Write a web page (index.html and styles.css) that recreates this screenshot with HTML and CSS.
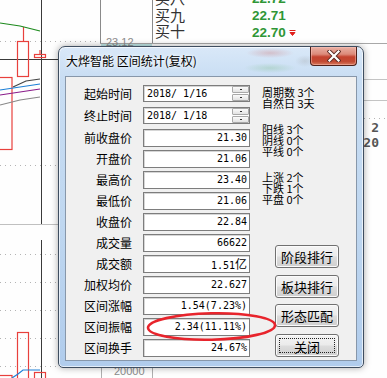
FILE: index.html
```html
<!DOCTYPE html>
<html lang="zh-CN">
<head>
<meta charset="utf-8">
<title>区间统计</title>
<link rel="stylesheet" href="styles.css">
</head>
<body>
<div class="stage">
  <svg class="chart" width="387" height="378" viewBox="0 0 387 378">
    <g stroke="#b4b4b4" stroke-dasharray="1 4">
      <line x1="0" y1="41.5" x2="100" y2="41.5"/>
      <line x1="0" y1="165.5" x2="58" y2="165.5"/>
      <line x1="0" y1="254.5" x2="58" y2="254.5"/>
      <line x1="0" y1="282.5" x2="58" y2="282.5"/>
      <line x1="0" y1="310.5" x2="58" y2="310.5"/>
      <line x1="0" y1="338.5" x2="58" y2="338.5"/>
      <line x1="0" y1="366.5" x2="58" y2="366.5"/>
      <line x1="364" y1="118.5" x2="387" y2="118.5"/>
    </g>
    <line x1="0" y1="224.5" x2="58" y2="224.5" stroke="#c0c0c0"/>
    <line x1="41.5" y1="0" x2="41.5" y2="224" stroke="#3a3a3a"/>
    <line x1="41.5" y1="240" x2="41.5" y2="378" stroke="#3a3a3a"/>
    <line x1="0" y1="59.5" x2="58" y2="59.5" stroke="#3a3a3a"/>
    <line x1="100.5" y1="0" x2="100.5" y2="43" stroke="#8a8a8a"/>
    <line x1="152.5" y1="0" x2="152.5" y2="43" stroke="#8a8a8a"/>
    <line x1="100" y1="43.5" x2="387" y2="43.5" stroke="#a8a8a8"/>
    <rect x="101" y="44" width="51" height="3" fill="#bfe6e6"/>
    <line x1="364" y1="79.5" x2="387" y2="79.5" stroke="#c4c4c4"/>
    <line x1="364" y1="100.5" x2="387" y2="100.5" stroke="#c4c4c4"/>
    <line x1="101.5" y1="365" x2="101.5" y2="378" stroke="#b0b0b0"/>
    <line x1="152.5" y1="365" x2="152.5" y2="378" stroke="#b0b0b0"/>

    <g fill="none" stroke="#e8403c" stroke-width="1.2">
      <line x1="23.5" y1="27" x2="23.5" y2="41.5"/>
      <rect x="17.5" y="41.5" width="11" height="35"/>
      <rect x="-1" y="77.5" width="13" height="72"/>
      <rect x="34.5" y="54.5" width="11" height="3"/>
      <line x1="40" y1="50" x2="40" y2="54"/>
      <rect x="17.5" y="332.5" width="11" height="50"/>
      <rect x="-1" y="375.5" width="13" height="10"/>
      <rect x="34.5" y="372.5" width="11" height="10"/>
    </g>
    <g fill="none" stroke-width="1.2">
      <polyline points="0,23 20,26 40,31" stroke="#1d8a1d"/>
      <polyline points="13,87 26,81 40,79" stroke="#444"/>
      <polyline points="0,90 20,87 40,84" stroke="#1c7fd6"/>
      <polyline points="0,95 20,92 40,89" stroke="#8a1c8a"/>
      <polyline points="0,105 20,100 40,97" stroke="#888"/>
      <polyline points="12,378 18,374 23,370 40,370" stroke="#1c7fd6"/>
    </g>

    <g class="bidname">
      <text x="155" y="4">买八</text>
      <text x="155" y="21">买九</text>
      <text x="155" y="37">买十</text>
    </g>
    <g class="bidprice">
      <text x="252" y="3">22.72</text>
      <text x="252" y="20">22.71</text>
      <text x="252" y="37">22.70</text>
    </g>
    <path d="M289.5 30.5h6M290 32.5h5l-2.5 3z" stroke="#e0201c" fill="#e0201c" stroke-width="1"/>
    <text class="axis" x="106" y="46">23.12</text>
    <text class="axis" x="114" y="375">20000</text>
    <text class="vol" x="379" y="132" text-anchor="end">2</text>
    <text class="vol" x="379" y="147" text-anchor="end">20</text>
  </svg>

  <div class="dialog">
    <div class="titlebar">
      <div class="title">大烨智能 区间统计(复权)</div>
      <div class="close">
        <svg width="14" height="12" viewBox="0 0 14 12">
          <path d="M2.5 1.5L11.5 10.5M11.5 1.5L2.5 10.5" stroke="#5a2a24" stroke-width="4" stroke-linecap="square"/>
          <path d="M2.5 1.5L11.5 10.5M11.5 1.5L2.5 10.5" stroke="#ffffff" stroke-width="2.2" stroke-linecap="square"/>
        </svg>
      </div>
    </div>
    <div class="client">
      <div class="form">
        <div class="lbl">起始时间</div>
        <div class="date"><span class="dtext">2018/ 1/16</span><span class="spin"><i><b></b></i><i><b></b></i></span></div>
        <div class="lbl">终止时间</div>
        <div class="date"><span class="dtext">2018/ 1/18</span><span class="spin"><i><b></b></i><i><b></b></i></span></div>
        <div class="lbl">前收盘价</div><div class="val">21.30</div>
        <div class="lbl">开盘价</div><div class="val">21.06</div>
        <div class="lbl">最高价</div><div class="val">23.40</div>
        <div class="lbl">最低价</div><div class="val">21.06</div>
        <div class="lbl">收盘价</div><div class="val">22.84</div>
        <div class="lbl">成交量</div><div class="val">66622</div>
        <div class="lbl">成交额</div><div class="val">1.51<span class="cjk">亿</span></div>
        <div class="lbl">加权均价</div><div class="val">22.627</div>
        <div class="lbl">区间涨幅</div><div class="val">1.54(7.23%)</div>
        <div class="lbl">区间振幅</div><div class="val">2.34(11.11%)</div>
        <div class="lbl">区间换手</div><div class="val">24.67%</div>
      </div>
      <div class="side">
        <div class="stats s1"><div>周期数 3个</div><div>自然日 3天</div></div>
        <div class="stats s2"><div>阳线 3个</div><div>阴线 0个</div><div>平线 0个</div></div>
        <div class="stats s3"><div>上涨 2个</div><div>下跌 1个</div><div>平盘 0个</div></div>
        <div class="btns">
          <div class="btn">阶段排行</div>
          <div class="btn">板块排行</div>
          <div class="btn">形态匹配</div>
          <div class="btn focus"><span>关闭</span></div>
        </div>
      </div>
    </div>
  </div>

  <svg class="mark" width="387" height="378" viewBox="0 0 387 378">
    <ellipse cx="211.5" cy="326.5" rx="63.5" ry="13.2" transform="rotate(-1.2 211.5 326.5)" fill="none" stroke="#e8242c" stroke-width="2.6"/>
  </svg>
</div>
</body>
</html>
```
FILE: styles.css
```css
html, body {
  margin: 0;
  padding: 0;
  background: #ffffff;
}

.stage {
  position: relative;
  width: 387px;
  height: 378px;
  overflow: hidden;
  background: #fefefe;
  font-family: "Noto Sans CJK SC", sans-serif;
  color: #000;
}

.chart {
  position: absolute;
  left: 0;
  top: 0;
}

.bidname text {
  font-family: "Noto Sans CJK SC", sans-serif;
  font-size: 15px;
  fill: #333;
}

.bidprice text {
  font-family: "Liberation Sans", sans-serif;
  font-weight: bold;
  font-size: 13.5px;
  fill: #2f9636;
}

.axis {
  font-family: "Liberation Sans", sans-serif;
  font-size: 11px;
  fill: #8c8c8c;
}

.vol {
  font-family: "DejaVu Sans Mono", monospace;
  font-weight: bold;
  font-size: 13px;
  fill: #555;
}

.dialog {
  position: absolute;
  left: 58px;
  top: 46px;
  width: 306px;
  height: 322px;
  box-sizing: border-box;
  border: 1px solid #3f4e60;
  border-radius: 7px 7px 5px 5px;
  padding: 0 6px 6px;
  background: linear-gradient(180deg, #d9e8f8 0%, #c8ddf3 10%, #bfd7f0 55%, #b0ccec 100%);
  box-shadow: 0 0 7px rgba(0, 0, 0, 0.35), inset 0 0 0 1px rgba(255, 255, 255, 0.65);
  display: flex;
  flex-direction: column;
}

.titlebar {
  flex: none;
  height: 29px;
  display: flex;
  align-items: flex-start;
  background:
    radial-gradient(ellipse 24px 5px at 205px 6px, rgba(205, 120, 120, 0.35), rgba(205, 120, 120, 0) 100%),
    radial-gradient(ellipse 26px 5px at 205px 21px, rgba(120, 185, 130, 0.3), rgba(120, 185, 130, 0) 100%),
    radial-gradient(ellipse 10px 6px at 240px 14px, rgba(150, 150, 150, 0.25), rgba(150, 150, 150, 0) 100%);
}

.title {
  margin-top: 7px;
  padding-left: 1px;
  font-size: 12px;
  line-height: 14px;
  color: #000;
  text-shadow: 0 0 6px #fff, 0 0 3px #fff;
}

.close {
  margin-left: auto;
  width: 47px;
  height: 19px;
  box-sizing: border-box;
  border: 1px solid #4f2019;
  border-top: none;
  border-radius: 0 0 4px 4px;
  background: linear-gradient(180deg, #e9b1a4 0%, #dc8a7a 40%, #c4432f 55%, #c24a33 80%, #d77a5e 100%);
  box-shadow: inset 0 0 0 1px rgba(255, 200, 190, 0.45);
  display: flex;
  align-items: center;
  justify-content: center;
}

.client {
  flex: 1;
  box-sizing: border-box;
  border: 1px solid #8797aa;
  background: #f0f0f0;
  display: flex;
  padding-top: 8px;
}

.form {
  display: grid;
  grid-template-columns: 66px 107px;
  grid-template-rows: 22px 22px repeat(11, 21px);
  column-gap: 11px;
  align-items: start;
}

.lbl {
  font-size: 12px;
  line-height: 18px;
  text-align: right;
  white-space: nowrap;
}

.date,
.val {
  box-sizing: border-box;
  background: #fff;
  border: 1px solid #7d7d7d;
  box-shadow: inset 1px 1px 0 #d6d6d6;
}

.date {
  height: 17px;
  display: flex;
  align-items: center;
  padding-left: 3px;
}

.dtext {
  flex: 1;
  font-family: "DejaVu Sans Mono", monospace;
  font-size: 10px;
  line-height: 15px;
  white-space: pre;
}

.spin {
  width: 17px;
  height: 15px;
  display: flex;
  flex-direction: column;
  gap: 1px;
}

.spin i {
  flex: 1;
  box-sizing: border-box;
  border: 1px solid #a9a9a9;
  border-radius: 1px;
  background: linear-gradient(180deg, #fbfbfb, #e2e2e2);
  display: flex;
  align-items: center;
  justify-content: center;
}

.spin b {
  width: 2px;
  height: 1px;
  background: #333;
}

.val {
  height: 18px;
  padding-right: 2px;
  text-align: right;
  font-family: "DejaVu Sans Mono", "Noto Sans CJK SC", monospace;
  font-size: 10px;
  line-height: 16px;
  white-space: nowrap;
}

.val .cjk {
  font-family: "Noto Sans CJK SC", sans-serif;
  font-size: 12px;
}

.side {
  padding-left: 12px;
  display: flex;
  flex-direction: column;
  align-items: flex-start;
}

.stats {
  font-size: 11px;
  line-height: 11px;
  white-space: pre;
}

.s1 {
  margin-top: 2px;
}

.s2,
.s3 {
  margin-top: 15px;
}

.btns {
  margin-top: 40px;
  margin-left: 13px;
  display: flex;
  flex-direction: column;
  gap: 6.5px;
}

.btn {
  width: 64px;
  height: 23px;
  box-sizing: border-box;
  border: 1px solid #707070;
  border-radius: 3px;
  background: linear-gradient(180deg, #f4f4f4 0%, #ebebeb 48%, #dddddd 52%, #cfcfcf 100%);
  box-shadow: inset 0 0 0 1px #fbfbfb;
  font-size: 13px;
  line-height: 21px;
  text-align: center;
  display: flex;
  align-items: center;
  justify-content: center;
}

.btn.focus span {
  width: 56px;
  height: 15px;
  line-height: 15px;
  box-sizing: border-box;
  border: 1px dotted #222;
}

.mark {
  position: absolute;
  left: 0;
  top: 0;
  pointer-events: none;
}
```
